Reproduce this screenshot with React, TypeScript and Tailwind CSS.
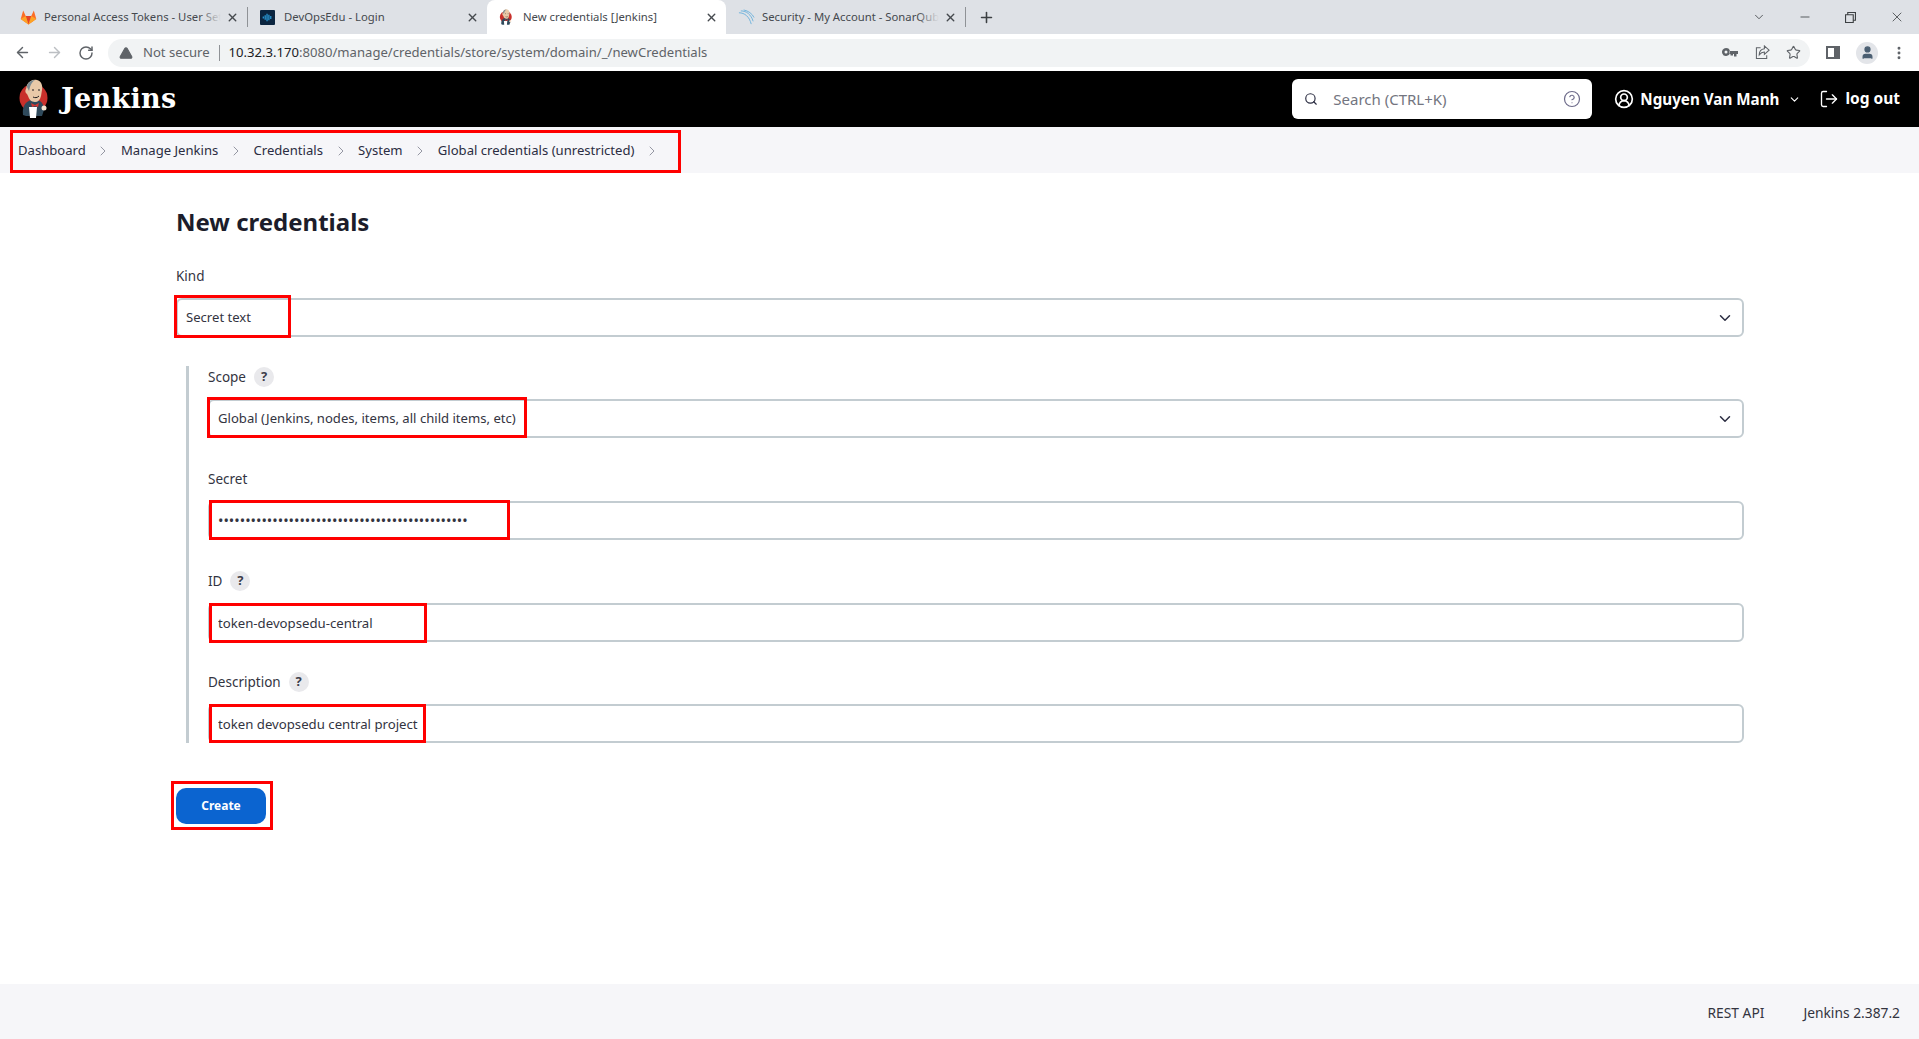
import { ArrowLeft, ArrowRight, ChevronDown, ChevronRight, CircleHelp, CircleUserRound, LogOut, Minus, MoreVertical, Plus, RotateCw, Search, Star, TriangleAlert, User, X } from "lucide-react";
import type { ReactNode } from "react";

const ui = "font-['Noto_Sans',sans-serif]";

function GitlabIcon() {
  return (
    <svg viewBox="0 0 24 24" className="h-[17px] w-[17px]">
      <path d="M12 22 1 14 4.5 2l3.6 8h7.8l3.6-8L23 14z" fill="#fc6d26" />
      <path d="M12 22 8.1 10h7.8z" fill="#e24329" />
      <path d="M1 14l11 8-3.9-12z M23 14l-11 8 3.9-12z" fill="#fca326" />
    </svg>
  );
}

function DevopsIcon() {
  return (
    <svg viewBox="0 0 16 16" className="h-[15px] w-[15px]">
      <rect width="16" height="16" rx="1" fill="#0b2540" />
      <path d="M3.5 7v2M5.5 5.5v5M7.5 4v8M9.5 5v6M11.5 6.5v3" stroke="#2ea8e8" strokeWidth="1.2" />
    </svg>
  );
}

function SonarIcon() {
  return (
    <svg viewBox="0 0 18 18" fill="none" className="h-[17px] w-[17px]" stroke="#6fb3dc" strokeWidth="1">
      <path d="M1 4c6 0 11 4 13 12" />
      <path d="M3 2c6 0 11 4 13 11" />
      <path d="M6 1c5 1 9 4 11 8" />
    </svg>
  );
}

function JenkinsLogo({ className }: { className: string }) {
  return (
    <svg viewBox="0 0 30 40" className={className}>
      <circle cx="14.5" cy="19" r="14" fill="#c8302b" />
      <path d="M4 36c-1-8 2-14 9-15 8-1 12 3 12 10l-2 6H7z" fill="#2f4a5c" />
      <path d="M8 6c2-4 6-6 10-5 4 1 6 5 5 10l-1 6c-1 4-3 6-6 6-4 0-6-3-7-6l-1-2c-2-1-2-4-1-5z" fill="#e9c9a8" />
      <path d="M8 8c0-4 4-7 8-7-3 2-4 4-5 7l-1 4z" fill="#7a8a92" />
      <path d="M13 11h2M19 11h2M14 18c2 1 4 1 6-1" stroke="#231f20" strokeWidth="1" fill="none" />
      <path d="M12 24l4 2 4-2-1 4-3-1-3 1z" fill="#d33833" />
      <path d="M10 28h8l-1 11h-6z" fill="#fff" />
      <circle cx="25" cy="29" r="2.5" fill="#f4e3cf" />
    </svg>
  );
}

function BrowserTab({ icon, title, active, fade }: { icon: ReactNode; title: string; active?: boolean; fade?: boolean }) {
  return (
    <div className={`relative flex h-[34px] w-[239px] shrink-0 items-center pl-[12px] pr-[8px] ${active ? "rounded-t-[8px] bg-white" : ""}`}>
      <span className="flex w-[24px] shrink-0 items-center">{icon}</span>
      <span className="relative min-w-0 flex-1 overflow-hidden whitespace-nowrap text-[11.3px] text-[#45494e]">
        {title}
        {fade && <span className="absolute inset-y-0 right-0 w-[22px] bg-gradient-to-r from-transparent to-[#dee1e6]" />}
      </span>
      <X className="ml-[5px] h-[13px] w-[13px] shrink-0 text-[#45494e]" strokeWidth={2.6} />
    </div>
  );
}

function ChromeBar() {
  return (
    <div className={`${ui} flex h-[34px] items-center bg-[#dee1e6] pl-[8px]`}>
      <BrowserTab icon={<GitlabIcon />} title="Personal Access Tokens - User Settings" fade />
      <div className="h-[20px] w-px shrink-0 bg-[#8f9296]" />
      <BrowserTab icon={<DevopsIcon />} title="DevOpsEdu - Login" />
      <BrowserTab icon={<JenkinsLogo className="h-[17px] w-[14px]" />} title="New credentials [Jenkins]" active />
      <BrowserTab icon={<SonarIcon />} title="Security - My Account - SonarQube" fade />
      <div className="h-[20px] w-px shrink-0 bg-[#8f9296]" />
      <Plus className="ml-[12px] h-[17px] w-[17px] text-[#3c4043]" strokeWidth={2.2} />
      <div className="ml-auto flex items-center text-[#3c4043]">
        <ChevronDown className="mr-[32px] h-[14px] w-[14px]" strokeWidth={1.4} />
        <Minus className="mr-[33px] h-[14px] w-[14px]" strokeWidth={1.4} />
        <svg viewBox="0 0 10 10" className="mr-[33px] h-[11px] w-[11px]" fill="none" stroke="currentColor">
          <path d="M.5 2.5h7v7h-7z M2.5 2.5v-2h7v7h-2" />
        </svg>
        <X className="mr-[14px] h-[16px] w-[16px]" strokeWidth={1.2} />
      </div>
    </div>
  );
}

function Toolbar() {
  return (
    <div className={`${ui} flex h-[37px] items-center bg-white pr-[12px] text-[#5f6368]`}>
      <ArrowLeft className="ml-[14px] h-[17px] w-[17px]" strokeWidth={2} />
      <ArrowRight className="ml-[15px] h-[17px] w-[17px] text-[#bcbfc3]" strokeWidth={2} />
      <RotateCw className="ml-[15px] h-[16px] w-[16px]" strokeWidth={2.2} />
      <div className="ml-[14px] flex h-[28px] w-[1702px] items-center rounded-full bg-[#f1f3f4] pl-[11px] text-[13.100px]">
        <TriangleAlert className="h-[14px] w-[14px] fill-[#5f6368] text-[#5f6368]" />
        <span className="ml-[10px] text-[#5f6368]">Not secure</span>
        <span className="mx-[9px] h-[16px] w-px bg-[#8f9296]" />
        <span className="text-[#5f6368]"><span className="text-[#202124]">10.32.3.170</span>:8080/manage/credentials/store/system/domain/_/newCredentials</span>
        <svg viewBox="0 0 16 10" className="ml-auto h-[10px] w-[16px]" fill="#5f6368">
          <path d="M4 0a4 4 0 1 1-3.7 5.5A4 4 0 0 1 4 0zm0 2.5a1.5 1.5 0 1 0 0 3 1.5 1.5 0 0 0 0-3zM7.5 3H16v3h-1.500v2.500H12V6h-1v1.500H8.500V6H7.500z" fillRule="evenodd" />
        </svg>
        <svg viewBox="0 0 16 16" className="ml-[17px] h-[15px] w-[15px]" fill="none" stroke="currentColor" strokeWidth="1.100">
          <path d="M6 3H1.500v11.500h11V11" />
          <path d="M15 5.500 10 1v3C6.500 4.500 4.500 7 4.500 10.500 6 8.500 7.500 7.500 10 7.500v2.500z" />
        </svg>
        <Star className="ml-[16px] mr-[9px] h-[15px] w-[15px]" strokeWidth={1.8} />
      </div>
      <span className="ml-[16px] h-[13px] w-[14px] border-[2px] border-r-[6px] border-[#5f6368]" />
      <span className="ml-[16px] flex h-[22px] w-[22px] items-center justify-center rounded-full bg-[#e3e5e9]">
        <User className="h-[15px] w-[15px] fill-[#4b5f72] text-[#4b5f72]" />
      </span>
      <MoreVertical className="ml-[13px] h-[16px] w-[16px]" strokeWidth={2.4} />
    </div>
  );
}

function JenkinsHeader() {
  return (
    <header className={`${ui} flex h-[56px] items-center bg-black pl-[19px] pr-[19px] text-white`}>
      <JenkinsLogo className="h-[40px] w-[30px]" />
      <span className="ml-[12px] -mt-[2px] font-['DejaVu_Serif',serif] text-[27px] font-bold leading-none tracking-[0.3px]">Jenkins</span>
      <div className="ml-auto flex h-[40px] w-[300px] items-center rounded-[6px] bg-white pl-[12px] pr-[11px]">
        <Search className="h-[14px] w-[14px] text-[#2b2d42]" strokeWidth={2} />
        <span className="ml-[15px] text-[15px] text-[#737580]">Search (CTRL+K)</span>
        <CircleHelp className="ml-auto h-[18px] w-[18px] text-[#6d6b8a]" strokeWidth={1.6} />
      </div>
      <CircleUserRound className="ml-[22px] h-[20px] w-[20px]" strokeWidth={2} />
      <span className="ml-[6px] text-[15.200px] font-bold">Nguyen Van Manh</span>
      <ChevronDown className="ml-[9px] h-[13px] w-[13px]" strokeWidth={2} />
      <LogOut className="ml-[18px] h-[20px] w-[20px]" strokeWidth={1.6} />
      <span className="ml-[6px] text-[15.500px] font-bold">log out</span>
    </header>
  );
}

const crumbs = ["Dashboard", "Manage Jenkins", "Credentials", "System", "Global credentials (unrestricted)"];

function Breadcrumbs() {
  return (
    <nav className={`${ui} relative flex h-[46px] items-center bg-[#f6f6f9] pl-[18px] pt-[2px] text-[13.100px] text-[#2b2d42]`}>
      {crumbs.map((crumb) => (
        <span key={crumb} className="flex items-center">
          {crumb}
          <ChevronRight className="mx-[9.600px] h-[16px] w-[16px] text-[#8d8f9c]" strokeWidth={1.4} />
        </span>
      ))}
      <div className="absolute left-[10px] top-[3px] h-[43px] w-[671px] border-[3px] border-[#f00]" />
    </nav>
  );
}

function Help() {
  return (
    <span className="ml-[8px] flex h-[20px] w-[20px] items-center justify-center rounded-full bg-[#e9e9ec] text-[13px] font-bold text-[#3c3d4a]">?</span>
  );
}

function Field({ label, help, children, gap = "mb-[30px]" }: { label: string; help?: boolean; children: ReactNode; gap?: string }) {
  return (
    <div className={gap}>
      <div className="mb-[11px] flex h-[22px] items-center text-[13.500px] text-[#33343f]">
        {label}
        {help && <Help />}
      </div>
      {children}
    </div>
  );
}

function SelectBox({ value, mark }: { value: string; mark: string }) {
  return (
    <div className="relative flex h-[39px] items-center rounded-[6px] border-2 border-[#c3ccd1] bg-white pl-[8px] pr-[8px] text-[13.100px] text-[#33343f]">
      {value}
      <ChevronDown className="ml-auto h-[18px] w-[18px] text-[#2b2d42]" strokeWidth={2} />
      <div className={mark} />
    </div>
  );
}

function TextBox({ value, secret, mark }: { value: string; secret?: boolean; mark: string }) {
  return (
    <div className="relative">
      <input
        readOnly
        type={secret ? "password" : "text"}
        value={value}
        className={`block h-[39px] w-full rounded-[6px] border-2 border-[#c3ccd1] bg-white pl-[8px] text-[#33343f] outline-none ${secret ? "text-[14.450px]" : "text-[13.200px]"}`}
      />
      <div className={mark} />
    </div>
  );
}

function CredentialsForm() {
  return (
    <main className={`${ui} flex-1 pl-[176px] pr-[175px]`}>
      <h1 className="mt-[33px] h-[32px] text-[24px] font-bold leading-[32px] text-[#1c1d2b]">New credentials</h1>
      <div className="mb-[29px] mt-[27px]">
        <Field label="Kind" gap="">
          <SelectBox value="Secret text" mark="absolute -left-[4px] -top-[5px] h-[43px] w-[117px] border-[3px] border-[#f00]" />
        </Field>
      </div>
      <div className="ml-[10px] border-l-[3px] border-[#c3ccd1] pl-[19px]">
        <Field label="Scope" help>
          <SelectBox value="Global (Jenkins, nodes, items, all child items, etc)" mark="absolute -left-[3px] -top-[4px] h-[41px] w-[320px] border-[3px] border-[#f00]" />
        </Field>
        <Field label="Secret">
          <TextBox value={"x".repeat(46)} secret mark="absolute left-[1px] -top-[1px] h-[40px] w-[301px] border-[3px] border-[#f00]" />
        </Field>
        <Field label="ID" help gap="mb-[29px]">
          <TextBox value="token-devopsedu-central" mark="absolute left-[1px] top-0 h-[40px] w-[218px] border-[3px] border-[#f00]" />
        </Field>
        <Field label="Description" help gap="">
          <TextBox value="token devopsedu central project" mark="absolute left-[1px] top-0 h-[39px] w-[217px] border-[3px] border-[#f00]" />
        </Field>
      </div>
      <div className="relative mt-[45px] w-[90px]">
        <button type="button" className="block h-[36px] w-[90px] rounded-[10px] bg-[#0b64d0] text-[12px] font-bold text-white">Create</button>
        <div className="absolute -left-[5px] -top-[7px] h-[49px] w-[102px] border-[3px] border-[#f00]" />
      </div>
    </main>
  );
}

export default function App() {
  return (
    <div className="flex h-screen flex-col overflow-hidden bg-white">
      <ChromeBar />
      <Toolbar />
      <JenkinsHeader />
      <Breadcrumbs />
      <CredentialsForm />
      <footer className={`${ui} flex h-[55px] items-center justify-end gap-[39px] bg-[#f6f6f9] pr-[19px] pt-[4px] text-[13.800px] text-[#33343f]`}>
        <span>REST API</span>
        <span>Jenkins 2.387.2</span>
      </footer>
    </div>
  );
}
